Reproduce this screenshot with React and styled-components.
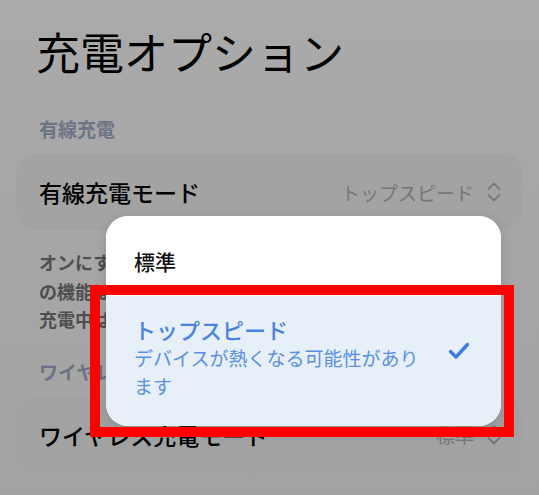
import styled, { createGlobalStyle } from "styled-components";

const GlobalStyle = createGlobalStyle`
  html, body {
    margin: 0;
    padding: 0;
    height: 100%;
  }
  body {
    font-family: "Noto Sans CJK JP", "Noto Sans", sans-serif;
    background: #f3f3f3;
  }
  * {
    box-sizing: border-box;
  }
`;

const Screen = styled.div`
  position: relative;
  min-height: 100vh;
  padding: 25px 16px 0;
  background: linear-gradient(#f3f3f3, #ececec);
  overflow: hidden;
`;

const Title = styled.h1`
  margin: 0 0 40px;
  padding-left: 20px;
  font-size: 44px;
  line-height: 52px;
  font-weight: 400;
  color: #000;
`;

const SectionLabel = styled.div`
  margin: 0 0 13px;
  padding-left: 23px;
  font-size: 19px;
  line-height: 24px;
  font-weight: 700;
  color: #9ca6bf;
`;

const SettingCard = styled.div`
  display: flex;
  align-items: center;
  justify-content: space-between;
  height: 76px;
  padding: 0 21px 0 23px;
  border-radius: 20px;
  background: #eaeaea;
`;

const CardLabel = styled.span`
  font-size: 23px;
  font-weight: 500;
  color: #000;
`;

const Value = styled.span`
  display: flex;
  align-items: center;
  gap: 12px;
  font-size: 19px;
  color: #ababab;
`;

const Description = styled.p`
  margin: 18px 0 26px;
  padding: 0 23px;
  font-size: 18px;
  line-height: 28.5px;
  font-weight: 700;
  color: #727272;
  white-space: nowrap;
`;

const Scrim = styled.div`
  position: absolute;
  inset: 0;
  background: linear-gradient(rgba(0, 0, 0, 0.3), rgba(0, 0, 0, 0.31));
`;

const Menu = styled.div`
  position: absolute;
  left: 106px;
  top: 216px;
  width: 395px;
  border-radius: 22px;
  background: #fff;
  overflow: hidden;
  box-shadow: 0 4px 14px rgba(0, 0, 0, 0.14);
`;

const MenuItem = styled.div`
  display: flex;
  align-items: center;
  gap: 24px;
  padding: ${({ $selected }) => ($selected ? "18px 31px 26px 28px" : "30px 28px 20px")};
  background: ${({ $selected }) => ($selected ? "#e7eff8" : "#fff")};
`;

const ItemText = styled.div`
  flex: 1;
  min-width: 0;
`;

const ItemTitle = styled.div`
  font-size: ${({ $selected }) => ($selected ? "22px" : "21px")};
  line-height: 30px;
  font-weight: 500;
  color: ${({ $selected }) => ($selected ? "#4b84e0" : "#111")};
`;

const ItemHint = styled.div`
  font-size: 19px;
  line-height: 28px;
  color: #5a8fe3;
`;

const CheckWrap = styled.span`
  display: flex;
  margin-bottom: 12px;
`;

const Highlight = styled.div`
  position: absolute;
  left: 90px;
  top: 285px;
  width: 424px;
  height: 152px;
  border: 10px solid #ff0000;
`;

const UpDownIcon = () => (
  <svg width="16" height="24" viewBox="0 0 16 24" fill="none">
    <path
      d="M2.5 9 L8 3.5 L13.5 9 M2.5 15 L8 20.5 L13.5 15"
      stroke="#ababab"
      strokeWidth="1.8"
      strokeLinecap="round"
      strokeLinejoin="round"
    />
  </svg>
);

const CheckIcon = () => (
  <svg width="22" height="18" viewBox="0 0 22 18" fill="none">
    <path
      d="M2.5 9.5 L8 15 L19.5 2.5"
      stroke="#3e7be6"
      strokeWidth="3.4"
      strokeLinecap="round"
      strokeLinejoin="round"
    />
  </svg>
);

export default function App() {
  return (
    <>
      <GlobalStyle />
      <Screen>
        <Title>充電オプション</Title>
        <SectionLabel>有線充電</SectionLabel>
        <SettingCard>
          <CardLabel>有線充電モード</CardLabel>
          <Value>
            トップスピード
            <UpDownIcon />
          </Value>
        </SettingCard>
        <Description>
          オンにすると、充電速度が向上します。ただし、こ
          <br />
          の機能はバッテリーの温度を上昇させるため、
          <br />
          充電中は端末が熱くなる場合があります。
        </Description>
        <SectionLabel>ワイヤレス充電</SectionLabel>
        <SettingCard>
          <CardLabel>ワイヤレス充電モード</CardLabel>
          <Value>
            標準
            <UpDownIcon />
          </Value>
        </SettingCard>

        <Scrim />
        <Menu>
          <MenuItem>
            <ItemText>
              <ItemTitle>標準</ItemTitle>
            </ItemText>
          </MenuItem>
          <MenuItem $selected>
            <ItemText>
              <ItemTitle $selected>トップスピード</ItemTitle>
              <ItemHint>デバイスが熱くなる可能性があります</ItemHint>
            </ItemText>
            <CheckWrap>
              <CheckIcon />
            </CheckWrap>
          </MenuItem>
        </Menu>
        <Highlight />
      </Screen>
    </>
  );
}
